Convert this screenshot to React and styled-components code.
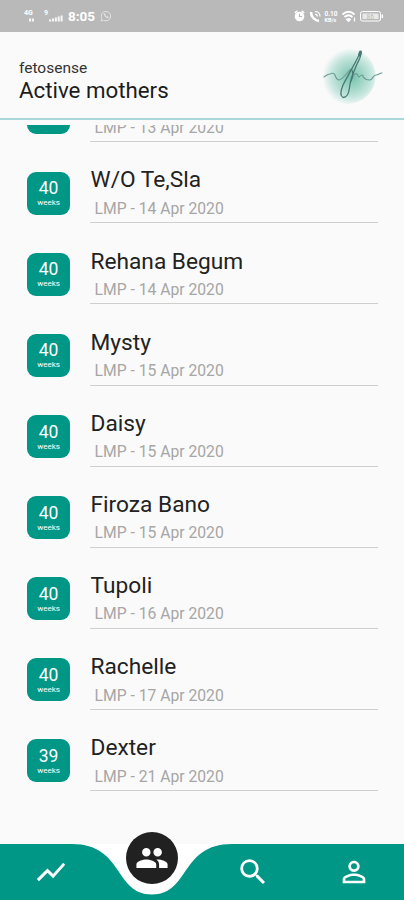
import React from 'react'
import styled, { createGlobalStyle } from 'styled-components';
import { MdShowChart, MdPeople, MdSearch, MdPersonOutline } from 'react-icons/md';

const mothers = [
    { name: '', weeks: '', lmp: '13 Apr 2020' },
    { name: 'W/O Te,Sla', weeks: 40, lmp: '14 Apr 2020' },
    { name: 'Rehana Begum', weeks: 40, lmp: '14 Apr 2020' },
    { name: 'Mysty', weeks: 40, lmp: '15 Apr 2020' },
    { name: 'Daisy', weeks: 40, lmp: '15 Apr 2020' },
    { name: 'Firoza Bano', weeks: 40, lmp: '15 Apr 2020' },
    { name: 'Tupoli', weeks: 40, lmp: '16 Apr 2020' },
    { name: 'Rachelle', weeks: 40, lmp: '17 Apr 2020' },
    { name: 'Dexter', weeks: 39, lmp: '21 Apr 2020' },
]

function Signal({ label, bars }) {
    return (
        <svg width="20" height="16" viewBox="0 0 20 16" fill="#fff">
            <text x="0" y="7" fontSize="7" fontWeight="700">{label}</text>
            {bars.map((h, i) => (
                <rect key={i} x={5 + i * 2.9} y={13.5 - h} width="2" height={h} opacity="0.9" />
            ))}
        </svg>
    )
}

function WhatsApp() {
    return (
        <svg width="12" height="12" viewBox="0 0 12 12" fill="none" stroke="#e2e2e2" strokeWidth="1">
            <path d="M1 11l.8-2.6A4.7 4.7 0 1 1 3.7 10.3z" />
            <path d="M4 4c0 2 2 4 4 4l.6-1-1.3-.7-.6.5L5.2 5.3l.4-.7L5 3.5z" fill="#e2e2e2" strokeWidth=".3" />
        </svg>
    )
}

function StatusIcons() {
    return (
        <svg width="92" height="16" viewBox="0 0 92 16" fill="none" stroke="#fff">
            <circle cx="5.5" cy="8.5" r="4.8" fill="#fff" stroke="none" />
            <path d="M.8 4.8l2.5-2M10.2 4.8l-2.5-2" strokeWidth="1.5" />
            <path d="M5.5 5.8v2.7h2.5" stroke="#b9b9b9" strokeWidth="1.2" />
            <path d="M17 4c0 4.5 3.5 8.5 8 9" strokeWidth="2.6" />
            <path d="M21 3.5c3.5 0 5 2 5 5M21 6.2c1.5 0 2.3 1 2.3 2.3" strokeWidth="1.2" />
            <text x="30.5" y="7.8" fontSize="6.5" fontWeight="700" fill="#fff" stroke="none">0.10</text>
            <text x="30.5" y="13.5" fontSize="5.5" fontWeight="700" fill="#fff" stroke="none">KB/s</text>
            <path d="M48.5 6.5c4-3.6 8-3.6 12 0M50.5 9c2.6-2.3 5.4-2.3 8 0M53 11.5l1.5 1.5 1.5-1.5c-1-.8-2-.8-3 0z" strokeWidth="1.8" />
            <path d="M60.5 9.5v4" strokeWidth="1.2" />
            <rect x="66.5" y="3.5" width="20" height="9.5" rx="2" />
            <rect x="68.5" y="5.5" width="16" height="5.5" fill="#e9e9e9" stroke="none" />
            <text x="72.5" y="10.7" fontSize="6.5" fill="#b9b9b9" stroke="none">86</text>
            <path d="M88.3 6.5v3.5" strokeWidth="1.5" />
        </svg>
    )
}

function Logo() {
    return (
        <svg width="72" height="66" viewBox="0 0 72 66" fill="none" strokeLinecap="round" strokeLinejoin="round">
            <defs>
                <radialGradient id="glow" cx="0.57" cy="0.52" r="0.52">
                    <stop offset="0" stopColor="#74c2ac" />
                    <stop offset="0.35" stopColor="#9cd4c4" />
                    <stop offset="0.7" stopColor="#c6e6de" />
                    <stop offset="1" stopColor="#fafafa" />
                </radialGradient>
            </defs>
            <circle cx="32.5" cy="34" r="28" fill="url(#glow)" />
            <path d="M9 35c2-1 3-3 6-3 2-1 4-1 5 1 1 3 2 5 4 5 4-1 7-6 12-11" stroke="#6b9993" strokeWidth="1.1" />
            <path d="M37 37c1-4 3-6 5-5 1 1 1 3 2 3 1-1 3-3 4-1 1 3 3 4 7 4 3-1 3-5 6-5 3 0 3-2 6-2" stroke="#6b9993" strokeWidth="1.1" />
            <path d="M44.500 12C40 22 33 33 28 43c-2 5-3 11 0 12.500 4 0 6-5 6.500-10C35 38 39 29 42 22c2-4 4-7 4-11.500z" stroke="#477a73" strokeWidth="1.3" />
            <path d="M44.500 13l1-3" stroke="#477a73" strokeWidth="3" />
            <path d="M37 28c1 3 1 6-1 11" stroke="#477a73" strokeWidth="1.1" />
        </svg>
    )
}

function Mother({ name, weeks, lmp }) {
    return (
        <Row>
            <Badge>
                <Weeks>{weeks}</Weeks>
                <WeeksLabel>weeks</WeeksLabel>
            </Badge>
            <Details>
                <Name>{name}</Name>
                <Lmp>LMP - {lmp}</Lmp>
            </Details>
        </Row>
    )
}

function App() {
    return (
        <Screen>
            <GlobalStyle />
            <StatusBar>
                <Signal label="4G" bars={[3, 3]} />
                <Signal label="9" bars={[2, 3, 4, 5, 6]} />
                <Time>8:05</Time>
                <WhatsApp />
                <Spacer />
                <StatusIcons />
            </StatusBar>
            <Header>
                <Titles>
                    <Brand>fetosense</Brand>
                    <Title>Active mothers</Title>
                </Titles>
                <Logo />
            </Header>
            <List>
                {mothers.map((m) => (
                    <Mother key={m.name} {...m} />
                ))}
            </List>
            <NavBar>
                <NavShape width="404" height="56" viewBox="0 0 404 56">
                    <rect width="404" height="56" fill="#fff" />
                    <path d="M0 0H72C124 0 114 50.5 152 50.5S180 0 232 0H404V56H0z" fill="#009787" />
                </NavShape>
                <NavItem><MdShowChart /></NavItem>
                <NavItem><Active><MdPeople /></Active></NavItem>
                <NavItem><MdSearch /></NavItem>
                <NavItem><MdPersonOutline /></NavItem>
            </NavBar>
        </Screen>
    )
}

export default App

const GlobalStyle = createGlobalStyle`
    body {
        margin:0;
        background-color:#fafafa;
        font-family:Roboto, sans-serif;
    }
`

const Screen = styled.div`
    width:404px;
    height:900px;
    display:flex;
    flex-direction:column;
    overflow:hidden;
    background-color:#fafafa;
`

const StatusBar = styled.div`
    height:32px;
    flex-shrink:0;
    box-sizing:border-box;
    padding:0 18px 0 24px;
    display:flex;
    align-items:center;
    background-color:#b9b9b9;
`
const Time = styled.span`
    color:white;
    font-size:13.5px;
    font-weight:700;
    margin:0 5px 0 4px;
`
const Spacer = styled.div`
    flex-grow:1;
`

const Header = styled.div`
    height:88px;
    flex-shrink:0;
    box-sizing:border-box;
    padding:0 17px 0 19px;
    display:flex;
    align-items:center;
    justify-content:space-between;
    border-bottom:2px solid #a9d8db;
`
const Titles = styled.div`
    display:flex;
    flex-direction:column;
    padding-top:12px;
`
const Brand = styled.span`
    font-size:15.5px;
    line-height:19px;
    color:#333;
`
const Title = styled.span`
    font-size:22.3px;
    line-height:25px;
    color:#1c1c1c;
`

const List = styled.div`
    flex:1;
    min-height:0;
    margin-top:5px;
    padding-bottom:53px;
    display:flex;
    flex-direction:column;
    justify-content:flex-end;
    overflow:hidden;
`
const Row = styled.div`
    height:81.1px;
    flex-shrink:0;
    display:flex;
    align-items:flex-end;
    padding:0 26px 0 27px;
`
const Badge = styled.div`
    width:43px;
    height:43px;
    margin:0 20px 8.6px 0;
    border-radius:9px;
    display:flex;
    flex-direction:column;
    align-items:center;
    justify-content:center;
    color:white;
    background-color:#009787;
`
const Weeks = styled.span`
    font-size:17.5px;
    line-height:20px;
    height:20px;
`
const WeeksLabel = styled.span`
    font-size:8px;
    line-height:10px;
`
const Details = styled.div`
    flex:1;
    display:flex;
    flex-direction:column;
    padding-bottom:3.4px;
    border-bottom:1px solid #cfcfcf;
`
const Name = styled.span`
    font-size:22.7px;
    line-height:28px;
    margin-left:0.5px;
    color:#222;
`
const Lmp = styled.span`
    font-size:15.7px;
    line-height:20px;
    margin:4.5px 0 0 4.5px;
    color:#a6a6a6;
`

const NavBar = styled.div`
    position:relative;
    height:56px;
    flex-shrink:0;
    display:grid;
    grid-template-columns:repeat(4, 1fr);
`
const NavShape = styled.svg`
    position:absolute;
    left:0;
    top:0;
`
const NavItem = styled.div`
    position:relative;
    display:flex;
    align-items:center;
    justify-content:center;
    color:white;
    font-size:34px;
`
const Active = styled.div`
    width:52px;
    height:52px;
    flex-shrink:0;
    border-radius:50%;
    display:flex;
    align-items:center;
    justify-content:center;
    background-color:#212121;
    margin-top:-29px;
`
